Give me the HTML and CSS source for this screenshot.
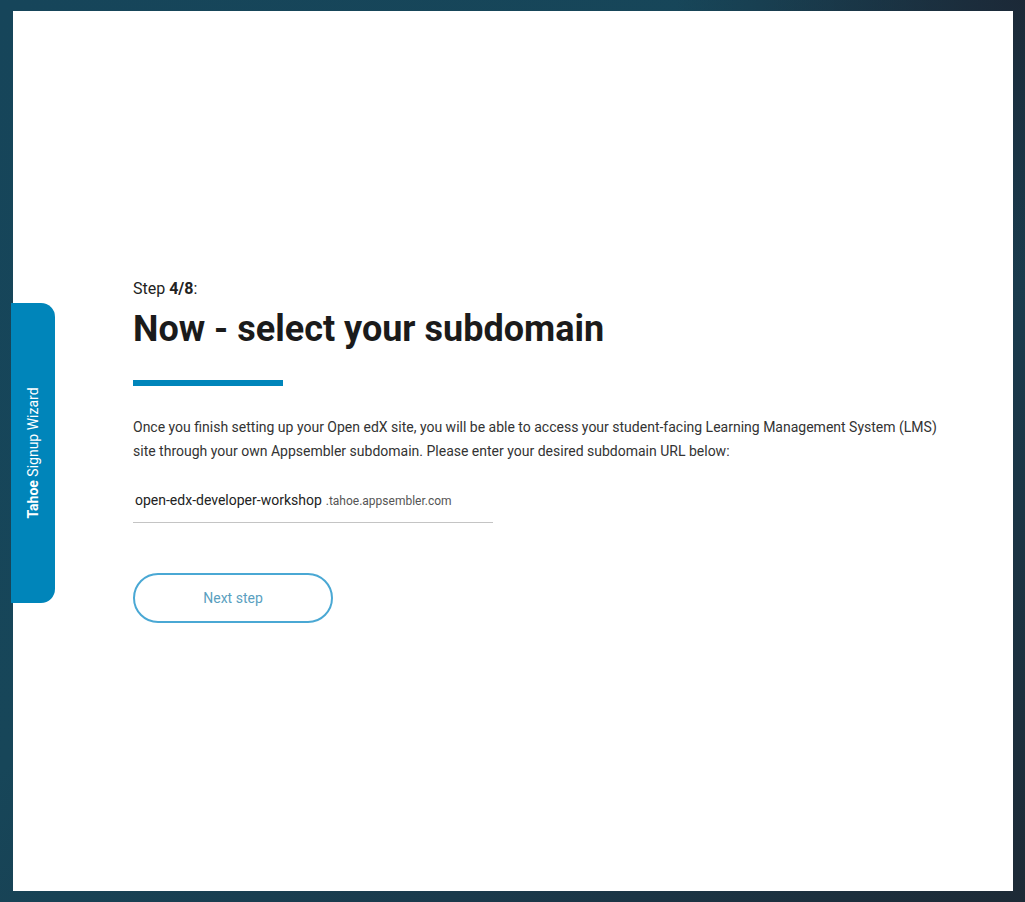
FILE: index.html
```html
<!DOCTYPE html>
<html lang="en">
<head>
<meta charset="utf-8">
<title>Tahoe Signup Wizard</title>
<link rel="stylesheet" href="styles.css">
</head>
<body>
<div class="panel">
  <div class="side-tab"><span><b>Tahoe</b> Signup Wizard</span></div>
  <main class="content">
    <p class="step">Step <b>4/8</b>:</p>
    <h1 class="title">Now - select your subdomain</h1>
    <div class="bar"></div>
    <p class="desc">Once you finish setting up your Open edX site, you will be able to access your student-facing Learning Management System (LMS) site through your own Appsembler subdomain. Please enter your desired subdomain URL below:</p>
    <div class="field">
      <span class="field-value">open-edx-developer-workshop</span>
      <span class="field-suffix">.tahoe.appsembler.com</span>
    </div>
    <button class="next-btn" type="button">Next step</button>
  </main>
</div>
</body>
</html>
```

FILE: styles.css
```css
html, body {
  margin: 0;
  padding: 0;
}
body {
  width: 1025px;
  height: 902px;
  overflow: hidden;
  font-family: Roboto, "Liberation Sans", Arial, sans-serif;
  background:
    radial-gradient(ellipse 500px 400px at 1025px 0px, rgba(28,38,52,0.9), rgba(28,38,52,0) 70%),
    linear-gradient(135deg, #16455a 0%, #174659 40%, #1a3a4c 70%, #1d2a36 100%);
  padding: 11px 12px 11px 13px;
  box-sizing: border-box;
}
.panel {
  position: relative;
  width: 1000px;
  height: 880px;
  background: #ffffff;
}
.side-tab {
  position: absolute;
  left: -2px;
  top: 292px;
  width: 44px;
  height: 300px;
  background: #0085ba;
  border-radius: 0 14px 14px 0;
  display: flex;
  align-items: center;
  justify-content: center;
}
.side-tab span {
  display: block;
  transform: rotate(-90deg);
  white-space: nowrap;
  color: #ffffff;
  font-size: 14px;
  line-height: 16px;
}
.side-tab b {
  font-weight: 700;
}
.content {
  padding: 268px 0 0 120px;
}
.step {
  margin: 0;
  font-size: 16px;
  line-height: 20px;
  color: #222;
}
.step b {
  font-weight: 700;
}
.title {
  margin: 10px 0 0;
  font-size: 36px;
  line-height: 40px;
  font-weight: 700;
  color: #1b1b1b;
}
.bar {
  margin-top: 31px;
  width: 150px;
  height: 6px;
  background: #0085ba;
}
.desc {
  margin: 29px 0 0;
  max-width: 815px;
  font-size: 14px;
  line-height: 24px;
  color: #333;
}
.field {
  margin-top: 27px;
  width: 358px;
  padding: 0 0 11px 2px;
  border-bottom: 1px solid #c4c4c4;
  line-height: 20px;
  white-space: nowrap;
}
.field-value {
  font-size: 14px;
  color: #222;
}
.field-suffix {
  font-size: 12px;
  color: #555;
}
.next-btn {
  display: block;
  margin-top: 50px;
  width: 200px;
  height: 50px;
  border: 2px solid #4aa8d4;
  border-radius: 25px;
  background: #fff;
  color: #5a9fbf;
  font-family: Roboto, "Liberation Sans", Arial, sans-serif;
  font-size: 14px;
  cursor: pointer;
}
```
